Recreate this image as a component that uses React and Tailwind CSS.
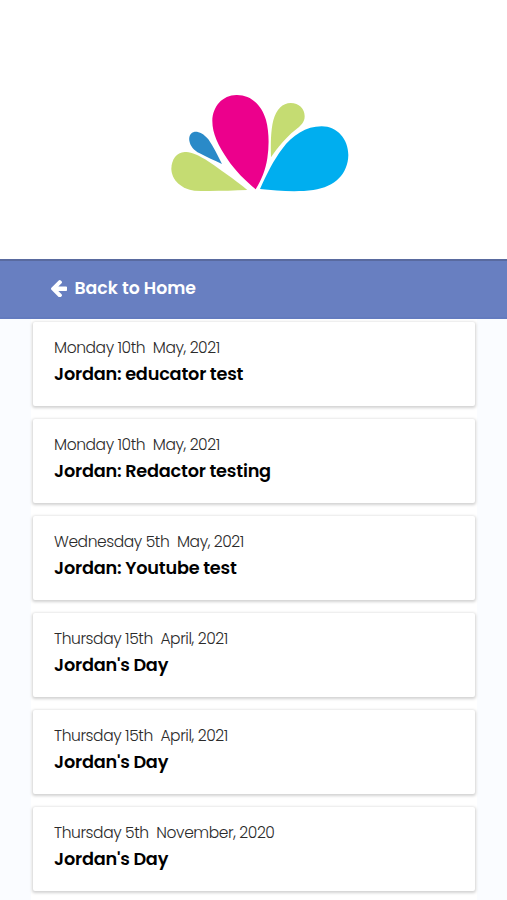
const entries = [
  { date: 'Monday 10th  May, 2021', title: 'Jordan: educator test' },
  { date: 'Monday 10th  May, 2021', title: 'Jordan: Redactor testing' },
  { date: 'Wednesday 5th  May, 2021', title: 'Jordan: Youtube test' },
  { date: 'Thursday 15th  April, 2021', title: "Jordan's Day" },
  { date: 'Thursday 15th  April, 2021', title: "Jordan's Day" },
  { date: 'Thursday 5th  November, 2020', title: "Jordan's Day" },
];

function Logo() {
  return (
    <svg viewBox="0 0 600 345" className="ml-[13px] h-[115px] w-[200px]" aria-label="Logo">
      <path fill="#c5dc72" d="M262 315C225 285 170 246 135 223C108 206 88 201 74 201C50 202 34 224 34 252C35 286 65 312 103 317C150 319 210 317 262 315Z" />
      <path fill="#2a8ac8" d="M186 237C174 214 160 184 145 163C131 145 116 139 104 140C92 142 86 153 88 167C91 184 101 195 119 205C140 216 163 227 186 237Z" />
      <path fill="#ec008c" d="M287 313C256 287 226 258 202 222C175 182 157 146 157 108C158 63 188 31 229 30C273 29 306 61 318 105C327 139 328 180 322 220C317 255 303 288 287 313Z" />
      <path fill="#c5dc72" d="M333 217C332 177 332 138 340 106C349 73 368 54 392 54C417 54 434 71 434 94C434 112 423 122 405 136C377 158 354 187 333 217Z" />
      <path fill="#00aeef" d="M300 312C321 265 341 225 367 191C397 151 438 124 485 124C532 124 565 163 565 210C564 266 526 305 460 315C408 322 349 317 300 312Z" />
    </svg>
  );
}

function ArrowLeft({ className }) {
  return (
    <svg viewBox="64 181 1472 1558" fill="currentColor" className={className} aria-hidden="true">
      <path d="M1536 896v128q0 53-32.500 90.500T1419 1152H715l293 294q38 36 38 90t-38 90l-75 76q-37 37-90 37-52 0-91-37L101 1050q-37-37-37-90 0-52 37-91l651-650q38-38 91-38 52 0 90 38l75 74q38 38 38 91t-38 91L715 768h704q52 0 84.500 37.500T1536 896z" />
    </svg>
  );
}

function EntryCard({ entry }) {
  return (
    <a href="#" className="flex h-[84px] flex-col rounded-[2px] bg-white pl-[21px] pt-3.5 shadow-[0_1px_3px_1px_rgba(0,0,0,0.18)]">
      <span className="whitespace-pre text-[15.5px] font-light leading-6 tracking-[-0.42px] text-[#2b2b2b]">{entry.date}</span>
      <span className="mt-0.5 whitespace-pre text-[17.7px] font-semibold leading-6 tracking-[-0.2px] text-black [word-spacing:-0.3px]">{entry.title}</span>
    </a>
  );
}

export default function App() {
  return (
    <div className="h-[900px] overflow-hidden bg-[#fafcff] font-[Poppins,Inter,sans-serif]">
      <header className="flex h-[259px] items-start justify-center bg-white pt-[85px]">
        <Logo />
      </header>
      <nav className="flex h-[60px] items-center border-y-2 border-b-[#637bbf] border-t-[#596a9f] bg-[#687fc1] pb-[3px] pl-[50.5px] text-white">
        <a href="#" className="flex items-center gap-[7.5px]">
          <ArrowLeft className="mt-0.5 h-[17.5px] w-[16.5px]" />
          <span className="whitespace-pre text-[17.3px] font-semibold leading-6">Back to Home</span>
        </a>
      </nav>
      <main className="ml-[31px] mr-[30px] flex flex-col gap-[13px] bg-white px-0.5 pb-3 pt-[3px]">
        {entries.map((entry, i) => (
          <EntryCard key={i} entry={entry} />
        ))}
      </main>
    </div>
  );
}
